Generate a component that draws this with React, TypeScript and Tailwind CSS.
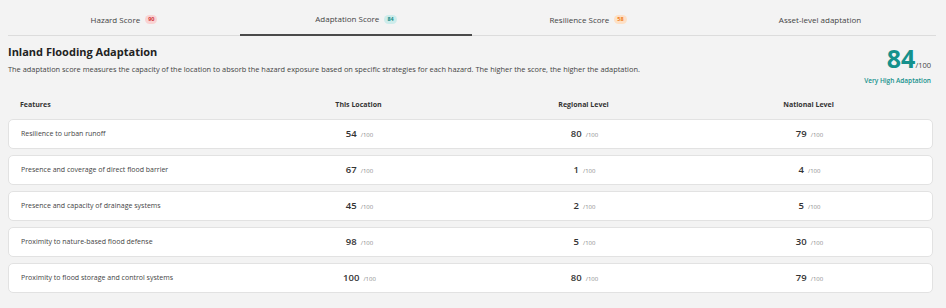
import React from "react";

interface Row {
  name: string;
  local: number;
  regional: number;
  national: number;
}

const ROWS: Row[] = [
  { name: "Resilience to urban runoff", local: 54, regional: 80, national: 79 },
  { name: "Presence and coverage of direct flood barrier", local: 67, regional: 1, national: 4 },
  { name: "Presence and capacity of drainage systems", local: 45, regional: 2, national: 5 },
  { name: "Proximity to nature-based flood defense", local: 98, regional: 5, national: 30 },
  { name: "Proximity to flood storage and control systems", local: 100, regional: 80, national: 79 },
];

const TABS = [
  { label: "Hazard Score", badge: "90", tone: "bg-[#f9d3d3] text-[#d0373b]" },
  { label: "Adaptation Score", badge: "84", tone: "bg-[#cdeceb] text-[#168c88]", active: true },
  { label: "Resilience Score", badge: "58", tone: "bg-[#fde0c6] text-[#f07f1c]" },
  { label: "Asset-level adaptation" },
];

function Score({ value }: { value: number }) {
  return (
    <div className="flex items-baseline justify-center gap-[4px]">
      <span className="text-[9.5px] font-semibold text-[#333]">{value}</span>
      <span className="text-[6px] text-[#8a8a8a]">/100</span>
    </div>
  );
}

export default function App() {
  return (
    <div
      className="bg-[#f3f3f3] w-[946px] h-[308px] overflow-hidden px-2 text-[#333]"
      style={{ fontFamily: '"Open Sans", sans-serif' }}
    >
      {/* tabs */}
      <div className="flex w-[928px] border-b border-[#dcdcdc] h-[36px]">
        {TABS.map((t) => (
          <div
            key={t.label}
            className={`flex-1 flex items-center justify-center gap-[5px] pt-[4px] text-[8px] text-[#444] ${
              t.active ? "border-b-2 border-[#4a4a4a] -mb-px" : ""
            }`}
          >
            <span>{t.label}</span>
            {t.badge && (
              <span className={`text-[5.5px] font-bold px-[3px] leading-[9px] rounded-full ${t.tone}`}>
                {t.badge}
              </span>
            )}
          </div>
        ))}
      </div>

      {/* heading */}
      <div className="flex justify-between items-start pt-[7px] w-[925px]">
        <div>
          <h1 className="text-[11px] font-bold text-[#222] leading-[18px]">Inland Flooding Adaptation</h1>
          <p className="text-[7.4px] text-[#444] leading-[12px] mt-[2px]">
            The adaptation score measures the capacity of the location to absorb the hazard exposure based on
            specific strategies for each hazard. The higher the score, the higher the adaptation.
          </p>
        </div>
        <div className="flex flex-col items-end mr-[2px] pt-[1px]">
          <div className="flex items-baseline">
            <span className="text-[25px] font-bold text-[#15918c] leading-[28px]">84</span>
            <span className="text-[7.5px] text-[#444]">/100</span>
          </div>
          <span className="text-[6.5px] font-semibold text-[#15918c] mt-[4px]">Very High Adaptation</span>
        </div>
      </div>

      {/* table header */}
      <div className="grid grid-cols-[226px_225px_225px_225px] px-3 w-[925px] mt-[9px] h-[20px] items-center text-[7px] font-bold text-[#333]">
        <span>Features</span>
        <span className="text-center">This Location</span>
        <span className="text-center">Regional Level</span>
        <span className="text-center">National Level</span>
      </div>

      {/* rows */}
      <div className="flex flex-col gap-[6px] mt-[4px] w-[925px]">
        {ROWS.map((r) => (
          <div
            key={r.name}
            className="grid grid-cols-[226px_225px_225px_225px] items-center px-3 h-[30px] bg-white border border-[#e2e2e2] rounded-[5px]"
          >
            <span className="text-[7px] text-[#444]">{r.name}</span>
            <Score value={r.local} />
            <Score value={r.regional} />
            <Score value={r.national} />
          </div>
        ))}
      </div>
    </div>
  );
}
